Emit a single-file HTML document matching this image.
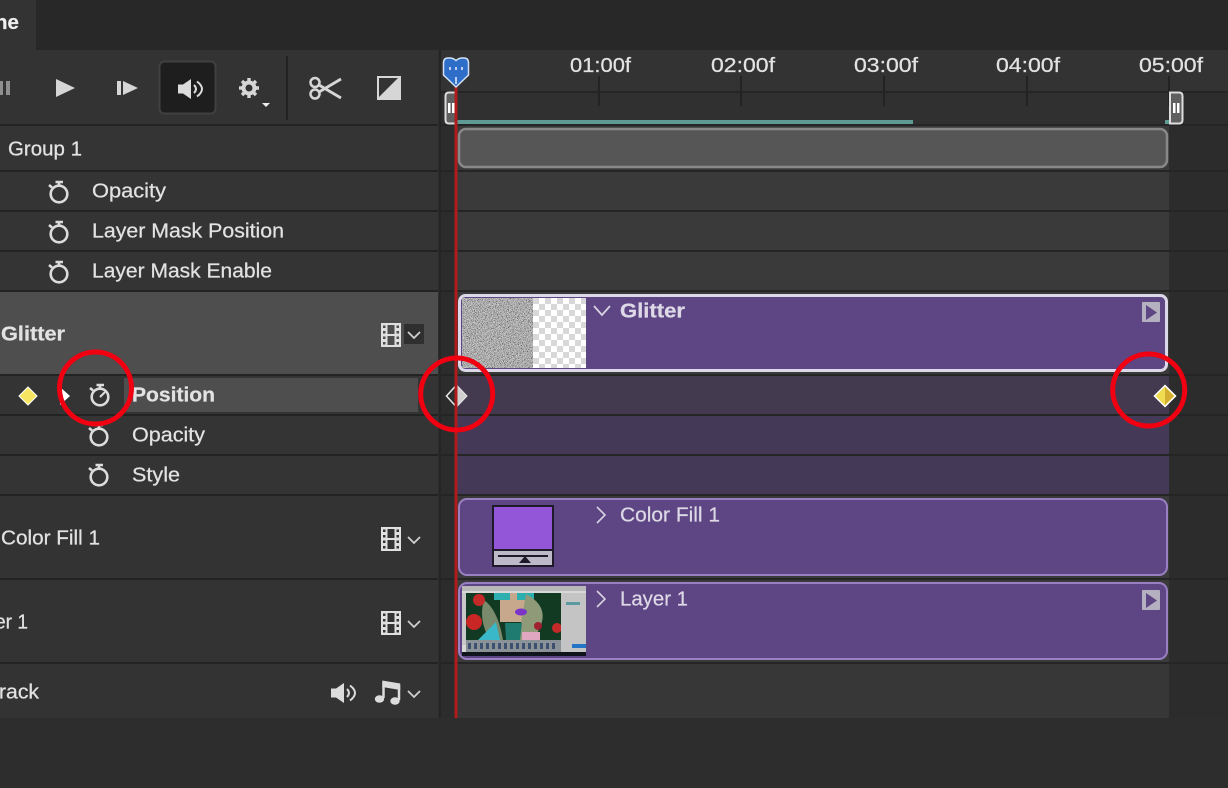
<!DOCTYPE html>
<html><head><meta charset="utf-8"><style>
html,body{margin:0;padding:0;background:#2d2d2d;width:1228px;height:788px;overflow:hidden}
svg{display:block}
text{font-family:"Liberation Sans",sans-serif;font-size:20.5px;fill:#e2e2e2;stroke:#e2e2e2;stroke-width:.25}
.b{font-weight:700}
.c{fill:#dcd8e6;stroke:#dcd8e6}
</style></head><body>
<svg width="1228" height="788" viewBox="0 0 1228 788" xmlns="http://www.w3.org/2000/svg">
<defs>
<pattern id="chk" width="12" height="12" patternUnits="userSpaceOnUse" x="533" y="298"><rect width="12" height="12" fill="#fff"/><rect width="6" height="6" fill="#d8d8d8"/><rect x="6" y="6" width="6" height="6" fill="#d8d8d8"/></pattern>
<filter id="nz" x="0" y="0" width="100%" height="100%"><feTurbulence type="fractalNoise" baseFrequency="1.3" numOctaves="2" seed="3"/><feColorMatrix type="matrix" values="1.4 0 0 0 -.28 1.4 0 0 0 -.28 1.4 0 0 0 -.28 0 0 0 0 1"/></filter>
<g id="sw" fill="none" stroke="#dcdcdc" stroke-width="2.600"><circle cx="0" cy="0" r="8.300"/><path d="M0-8V-12M-3.500-12H4M-10-9L-7-6.500"/></g>
<g id="film" fill="#e0e0e0"><path fill-rule="evenodd" d="M0 0H20V24H0ZM6.500 2V11H13.500V2ZM6.500 13V22H13.500V13ZM2 2.500V5H4.500V2.500ZM2 8V10.500H4.500V8ZM2 13.500V16H4.500V13.500ZM2 19V21.500H4.500V19ZM15.500 2.500V5H18V2.500ZM15.500 8V10.500H18V8ZM15.500 13.500V16H18V13.500ZM15.500 19V21.500H18V19Z"/></g>
<path id="chev" d="M0 0L6 6L12 0" fill="none" stroke="#d0d0d0" stroke-width="1.800"/>
<g id="spk"><path d="M0 5.500H5L13 0V20L5 14.500H0Z" fill="#dcdcdc"/><path d="M16 6Q20 10 16 14M19 2.500Q29 10 19 17.500" fill="none" stroke="#dcdcdc" stroke-width="2"/></g>
<g id="pl"><rect y="1" width="18" height="20" rx="1" fill="#b5b0bf"/><path d="M4 4L15 11.500L4 19Z" fill="#5e4583"/></g>
</defs>

<rect width="1228" height="788" fill="#2d2d2d"/>
<!-- top -->
<rect width="1228" height="50" fill="#282828"/>
<rect width="36" height="50" fill="#333"/>
<text x="-5" y="29" class="b" style="fill:#f0f0f0">ne</text>

<!-- left panel -->
<rect x="0" y="50" width="438" height="668" fill="#232323"/>
<rect x="0" y="50" width="438" height="74" fill="#333"/>
<rect x="0" y="126" width="438" height="44" fill="#343434"/>
<rect x="0" y="172" width="438" height="38" fill="#343434"/>
<rect x="0" y="212" width="438" height="38" fill="#343434"/>
<rect x="0" y="252" width="438" height="38" fill="#343434"/>
<rect x="0" y="292" width="438" height="82" fill="#4e4e4e"/>
<rect x="0" y="376" width="438" height="38" fill="#343434"/>
<rect x="124" y="378" width="294" height="34" fill="#4e4e4e"/>
<rect x="0" y="416" width="438" height="38" fill="#343434"/>
<rect x="0" y="456" width="438" height="38" fill="#343434"/>
<rect x="0" y="496" width="438" height="82" fill="#333"/>
<rect x="0" y="580" width="438" height="82" fill="#333"/>
<rect x="0" y="664" width="438" height="54" fill="#333"/>

<!-- toolbar -->
<path d="M0 81H3V95H0ZM6 81H10V95H6Z" fill="#8f8f8f"/>
<path d="M56 79L75 88L56 97Z" fill="#d6d6d6"/>
<path d="M117 81H121V95H117ZM123 81L138 88L123 95Z" fill="#d6d6d6"/>
<rect x="159.500" y="61.500" width="56" height="52" rx="5" fill="#1e1e1e" stroke="#404040" stroke-width="2"/>
<use href="#spk" x="178" y="79"/>
<g transform="translate(249 88)" fill="#d6d6d6"><circle r="7.500"/><g stroke="#d6d6d6" stroke-width="3.400"><path d="M0-10V10M-10 0H10M-7-7L7 7M-7 7L7-7"/></g><circle r="3.500" fill="#333"/></g>
<path d="M262 103H270L266 107Z" fill="#eee"/>
<rect x="286" y="56" width="2" height="64" fill="#222"/>
<g fill="none" stroke="#d6d6d6" stroke-width="2.500"><circle cx="315" cy="82.500" r="4.500"/><circle cx="315" cy="94" r="4.500"/><path d="M319 85L341 98M319 92L341 79" stroke-width="2.800"/></g>
<rect x="377" y="76" width="24" height="24" fill="#d6d6d6"/><path d="M379 78H398L379 97Z" fill="#333"/>

<!-- right background -->
<rect x="439" y="50" width="789" height="668" fill="#2c2c2c"/>
<rect x="439" y="50" width="789" height="41" fill="#333"/>
<rect x="439" y="91" width="789" height="2" fill="#252525"/>
<rect x="439" y="93" width="789" height="31" fill="#2d2d2d"/>
<rect x="456" y="93" width="713" height="31" fill="#303030"/>
<rect x="439" y="124" width="789" height="2" fill="#252525"/>
<rect x="439" y="50" width="2" height="668" fill="#252525"/>
<rect x="456" y="126" width="713" height="44" fill="#3a3a3a"/>
<rect x="456" y="172" width="713" height="38" fill="#3a3a3a"/>
<rect x="456" y="212" width="713" height="38" fill="#3a3a3a"/>
<rect x="456" y="252" width="713" height="38" fill="#3a3a3a"/>
<rect x="456" y="292" width="713" height="82" fill="#3a3a3a"/>
<rect x="456" y="376" width="713" height="38" fill="#433a50"/>
<rect x="456" y="416" width="713" height="38" fill="#443a58"/>
<rect x="456" y="456" width="713" height="38" fill="#443a58"/>
<rect x="456" y="496" width="713" height="82" fill="#3a3a3a"/>
<rect x="456" y="580" width="713" height="82" fill="#3a3a3a"/>
<rect x="456" y="664" width="713" height="54" fill="#373737"/>
<g fill="#252525"><rect x="439" y="170" width="789" height="2"/><rect x="439" y="210" width="789" height="2"/><rect x="439" y="250" width="789" height="2"/><rect x="439" y="290" width="789" height="2"/><rect x="439" y="374" width="789" height="2"/><rect x="439" y="414" width="789" height="2"/><rect x="439" y="454" width="789" height="2"/><rect x="439" y="494" width="789" height="2"/><rect x="439" y="578" width="789" height="2"/><rect x="439" y="662" width="789" height="2"/></g>
<rect x="0" y="718" width="1228" height="70" fill="#2d2d2d"/>

<!-- ruler -->
<g fill="#232323"><rect x="598" y="76" width="2" height="30"/><rect x="740" y="76" width="2" height="30"/><rect x="883" y="76" width="2" height="30"/><rect x="1026" y="76" width="2" height="30"/><rect x="1168" y="76" width="2" height="30"/></g>
<text x="570" y="72" textLength="61" lengthAdjust="spacingAndGlyphs">01:00f</text>
<text x="711" y="72" textLength="64" lengthAdjust="spacingAndGlyphs">02:00f</text>
<text x="854" y="72" textLength="64" lengthAdjust="spacingAndGlyphs">03:00f</text>
<text x="996" y="72" textLength="64" lengthAdjust="spacingAndGlyphs">04:00f</text>
<text x="1139" y="72" textLength="64" lengthAdjust="spacingAndGlyphs">05:00f</text>
<rect x="457" y="120" width="456" height="4" fill="#5f9a94"/>
<rect x="1165" y="120" width="4" height="4" fill="#5f9a94"/>
<path d="M456 92.500H449Q445.500 92.500 445.500 96V120Q445.500 123.500 449 123.500H456Z" fill="#5f5f5f" stroke="#ddd" stroke-width="2"/>
<path d="M448 103h2.500v10H448zM452 103h2.500v10H452z" fill="#fff"/>
<path d="M1170 92.500H1179Q1182.500 92.500 1182.500 96V120Q1182.500 123.500 1179 123.500H1170Z" fill="#5f5f5f" stroke="#ddd" stroke-width="2"/>
<path d="M1173 103h2.500v10H1173zM1177 103h2.500v10H1177z" fill="#fff"/>

<!-- clips -->
<rect x="459" y="129" width="708" height="38" rx="7" fill="#565656" stroke="#888" stroke-width="2.500"/>
<rect x="459.500" y="295.500" width="707" height="75" rx="6" fill="#5e4583" stroke="#dcd8e8" stroke-width="3"/>
<svg x="462" y="298" width="71" height="70"><rect width="71" height="70" filter="url(#nz)"/></svg>
<rect x="533" y="298" width="53" height="70" fill="url(#chk)"/>
<path d="M594 306L602 315L610 306" fill="none" stroke="#d8d3e2" stroke-width="1.800"/>
<text x="620" y="317.500" class="b c" textLength="65" lengthAdjust="spacingAndGlyphs">Glitter</text>
<use href="#pl" x="1142" y="301"/>

<rect x="459" y="499" width="708" height="76" rx="8" fill="#5e4583" stroke="#9a80c2" stroke-width="2"/>
<rect x="493" y="506" width="60" height="60" fill="#bdb9c9" stroke="#1f1a2a" stroke-width="2"/>
<rect x="494" y="507" width="58" height="42" fill="#9356d8"/>
<rect x="493" y="549" width="60" height="2" fill="#1f1a2a"/>
<rect x="498" y="555" width="50" height="2" fill="#1f1a2a"/>
<path d="M519 563L525 556L531 563Z" fill="#1f1a2a"/>
<path d="M597 507L605 515L597 523" fill="none" stroke="#d8d3e2" stroke-width="1.600"/>
<text x="620" y="521.500" class="c" textLength="100" lengthAdjust="spacingAndGlyphs">Color Fill 1</text>

<rect x="459" y="583" width="708" height="76" rx="8" fill="#5e4583" stroke="#9a80c2" stroke-width="2"/>
<!-- layer thumb -->
<rect x="462" y="586" width="124" height="70" fill="#d8d8d8"/>
<rect x="462" y="586" width="124" height="5" fill="#b8b8b8"/>
<rect x="466" y="593" width="95" height="47" fill="#123a22"/>
<path d="M500 593H533V622H500Z" fill="#c8a88c"/>
<path d="M494 593H510V600H494ZM517 593H534V600H517Z" fill="#2dafb0"/>
<path d="M484 600Q498 610 503 640H490Q478 620 484 600Z" fill="#7a8a6c"/>
<path d="M526 594Q556 610 532 640H518Z" fill="#8e9a78"/>
<ellipse cx="521" cy="612" rx="6" ry="3.500" fill="#7a35c8"/>
<circle cx="479" cy="600" r="6" fill="#c42a2a"/><circle cx="474" cy="622" r="8" fill="#c92626"/>
<circle cx="538" cy="626" r="4" fill="#a02030"/><circle cx="557" cy="628" r="5" fill="#c42a2a"/>
<path d="M478 640L496 622L500 640Z" fill="#38b8c8"/>
<path d="M505 623H522L520 640H506Z" fill="#1f7a70"/>
<path d="M522 632H540V640H522Z" fill="#e0a8c0"/>
<rect x="462" y="593" width="4" height="52" fill="#c8c8c8"/>
<rect x="561" y="593" width="25" height="59" fill="#c4c4c4"/>
<rect x="572" y="644" width="14" height="4" fill="#2475c8"/><rect x="566" y="602" width="14" height="3" fill="#5a9aa0"/>
<rect x="466" y="640" width="95" height="12" fill="#8a9298"/>
<g fill="#3c5070"><rect x="468" y="643" width="3" height="6"/><rect x="474" y="643" width="3" height="6"/><rect x="480" y="643" width="3" height="6"/><rect x="486" y="643" width="3" height="6"/><rect x="492" y="643" width="3" height="6"/><rect x="498" y="643" width="3" height="6"/><rect x="504" y="643" width="3" height="6"/><rect x="510" y="643" width="3" height="6"/><rect x="516" y="643" width="3" height="6"/><rect x="522" y="643" width="3" height="6"/><rect x="528" y="643" width="3" height="6"/><rect x="534" y="643" width="3" height="6"/><rect x="540" y="643" width="3" height="6"/><rect x="546" y="643" width="3" height="6"/><rect x="552" y="643" width="3" height="6"/></g>
<rect x="462" y="652" width="124" height="4" fill="#10141c"/>
<path d="M597 591L605 599L597 607" fill="none" stroke="#d8d3e2" stroke-width="1.600"/>
<text x="620" y="605.500" class="c" textLength="68" lengthAdjust="spacingAndGlyphs">Layer 1</text>
<use href="#pl" x="1142" y="589"/>

<!-- labels -->
<text x="8" y="155.500" textLength="74" lengthAdjust="spacingAndGlyphs">Group 1</text>
<use href="#sw" x="59" y="194"/><text x="92" y="197.500" textLength="74" lengthAdjust="spacingAndGlyphs">Opacity</text>
<use href="#sw" x="59" y="234"/><text x="92" y="237.500" textLength="192" lengthAdjust="spacingAndGlyphs">Layer Mask Position</text>
<use href="#sw" x="59" y="274"/><text x="92" y="277.500" textLength="180" lengthAdjust="spacingAndGlyphs">Layer Mask Enable</text>
<text x="1" y="340.500" class="b" textLength="64" lengthAdjust="spacingAndGlyphs">Glitter</text>
<use href="#film" x="381" y="323"/>
<rect x="404" y="324" width="20" height="20" fill="#2f2f2f"/>
<use href="#chev" x="408" y="332"/>

<path d="M28 387L37 396L28 405L19 396Z" fill="#f6e560" stroke="#fff" stroke-width="1"/>
<path d="M60 387L70 396L60 405Z" fill="#fff"/>
<use href="#sw" x="100" y="397"/><path d="M100 397L105 392" stroke="#dcdcdc" stroke-width="2"/>
<text x="132" y="401.500" class="b" textLength="83" lengthAdjust="spacingAndGlyphs">Position</text>
<use href="#sw" x="99" y="437"/><text x="132" y="441.500" textLength="73" lengthAdjust="spacingAndGlyphs">Opacity</text>
<use href="#sw" x="99" y="477"/><text x="132" y="481.500" textLength="48" lengthAdjust="spacingAndGlyphs">Style</text>

<text x="1" y="544.500" textLength="99" lengthAdjust="spacingAndGlyphs">Color Fill 1</text>
<use href="#film" x="381" y="527"/><use href="#chev" x="408" y="537"/>
<text x="-5" y="628.500" textLength="33" lengthAdjust="spacingAndGlyphs">er 1</text>
<use href="#film" x="381" y="611"/><use href="#chev" x="408" y="621"/>
<text x="-1" y="698.500" textLength="40" lengthAdjust="spacingAndGlyphs">rack</text>
<use href="#spk" x="331" y="683"/>
<path d="M383.500 682V698M399 685V700" stroke="#dcdcdc" stroke-width="2.500" fill="none"/>
<path d="M382.300 680.500L400.200 683.500V690L382.300 687Z" fill="#dcdcdc"/>
<ellipse cx="379.500" cy="699" rx="4.700" ry="3.700" fill="#dcdcdc"/><ellipse cx="395" cy="701" rx="4.700" ry="3.700" fill="#dcdcdc"/>
<use href="#chev" x="408" y="691"/>

<!-- keyframes -->
<path d="M456 385.500L446.500 396L456 406.500Z" fill="#2c2c2c" stroke="#e8e8e8" stroke-width="1.500"/>
<path d="M457 385.500L467 396L457 406.500Z" fill="#cfcfcf" stroke="#e8e8e8" stroke-width="1"/>
<path d="M1165 385.500L1175.500 396L1165 406.500L1154.500 396Z" fill="#f0dc50" stroke="#fff" stroke-width="1.500"/>
<path d="M1165 387L1174 396L1165 405Z" fill="#d4ae30"/>

<!-- playhead -->
<rect x="454.500" y="85" width="3" height="633" fill="#b01c1c"/>
<path d="M443.500 63Q443.500 58 448 58H450Q453 58 456 60.500Q459 58 462 58H464Q468.500 58 468.500 63V75L456 87L443.500 75Z" fill="#2f6ec8" stroke="#cfe0f5" stroke-width="1.500"/>
<path d="M450 67v3M456 67v3M462 67v3M456 77v7" stroke="#e8f0fb" stroke-width="1.500"/>

<!-- red annotation circles -->
<g fill="none" stroke="#f00010" stroke-width="5"><circle cx="95.500" cy="388" r="36"/><circle cx="456.700" cy="394" r="36"/><circle cx="1148.700" cy="390" r="36"/></g>
</svg>
</body></html>
